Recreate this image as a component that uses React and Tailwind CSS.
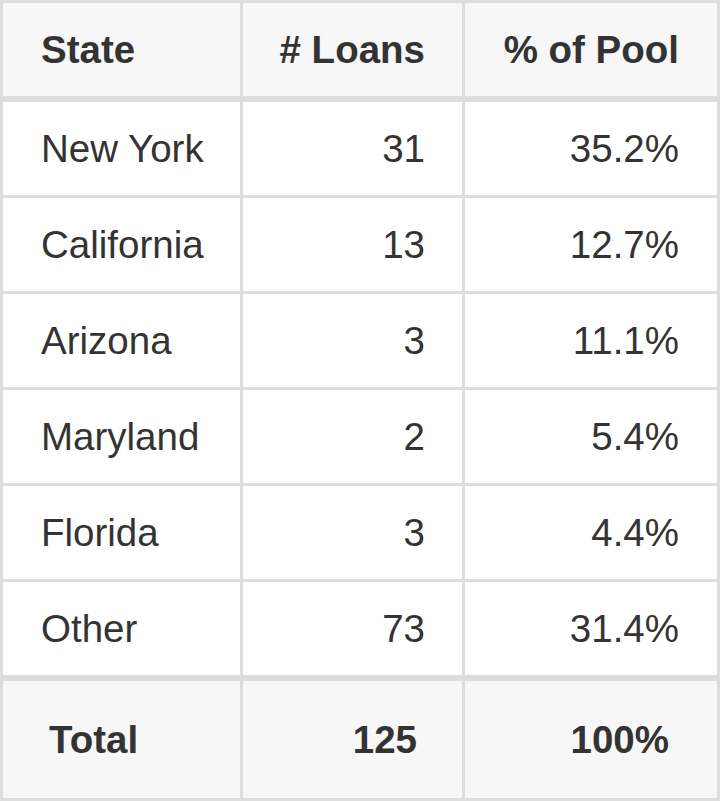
const rows = [
  { state: "New York", loans: 31, pct: "35.2%" },
  { state: "California", loans: 13, pct: "12.7%" },
  { state: "Arizona", loans: 3, pct: "11.1%" },
  { state: "Maryland", loans: 2, pct: "5.4%" },
  { state: "Florida", loans: 3, pct: "4.4%" },
  { state: "Other", loans: 73, pct: "31.4%" },
];

const grid = "grid grid-cols-[237px_219px_252px] gap-x-[3px]";

export default function App() {
  return (
    <div
      className="w-[720px] h-[801px] bg-[#dddddd] border-[3px] border-[#dddddd] text-[#333333] text-[38.5px]"
      style={{ fontFamily: '"Liberation Sans", Arial, Helvetica, sans-serif' }}
    >
      <div className={`${grid} h-[93px] font-bold`}>
        <div className="bg-[#f7f7f7] flex items-center pl-[38px]">State</div>
        <div className="bg-[#f7f7f7] flex items-center justify-end pr-[37px]"># Loans</div>
        <div className="bg-[#f7f7f7] flex items-center justify-end pr-[38px]">% of Pool</div>
      </div>

      <div className="mt-[6px] flex flex-col gap-y-[3px]">
        {rows.map((row) => (
          <div key={row.state} className={`${grid} h-[93px]`}>
            <div className="bg-white flex items-center pl-[38px]">{row.state}</div>
            <div className="bg-white flex items-center justify-end pr-[37px]">{row.loans}</div>
            <div className="bg-white flex items-center justify-end pr-[38px]">{row.pct}</div>
          </div>
        ))}
      </div>

      <div className={`${grid} mt-[6px] h-[117px] font-bold`}>
        <div className="bg-[#f7f7f7] flex items-center pl-[46px]">Total</div>
        <div className="bg-[#f7f7f7] flex items-center justify-end pr-[45px]">125</div>
        <div className="bg-[#f7f7f7] flex items-center justify-end pr-[48px]">100%</div>
      </div>
    </div>
  );
}
